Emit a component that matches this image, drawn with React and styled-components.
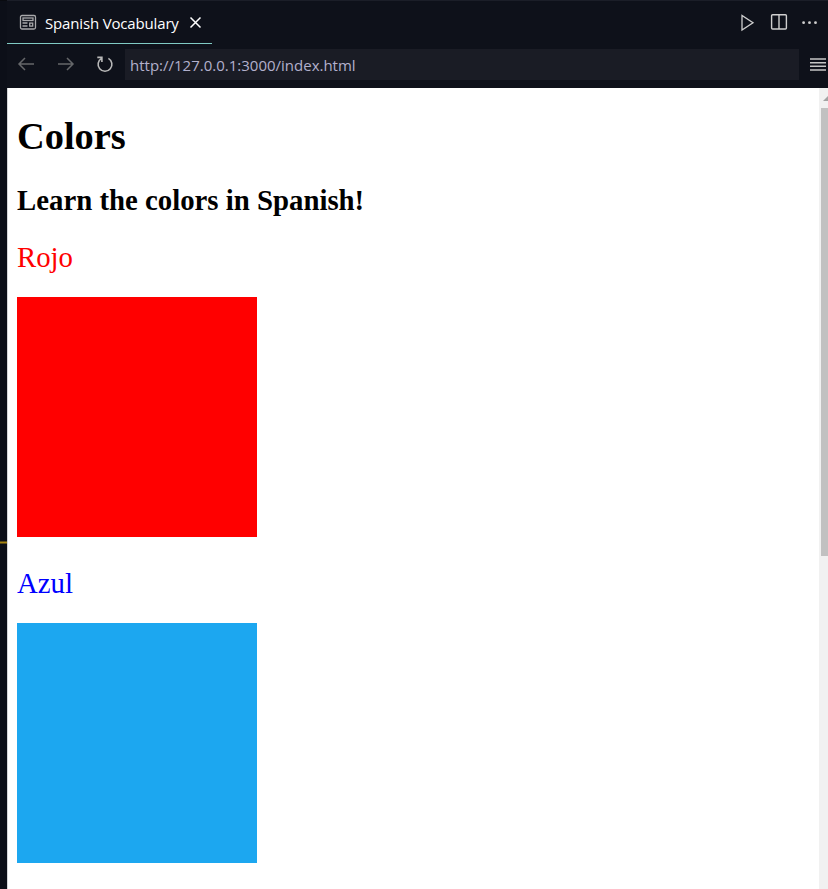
import React from "react";
import styled, { createGlobalStyle } from "styled-components";

const GlobalStyle = createGlobalStyle`
  * { box-sizing: border-box; }
  body { margin: 0; background: #0e111a; overflow: hidden; }
`;

const Window = styled.div`
  display: grid;
  grid-template-columns: 7px 1fr;
  width: 828px;
  height: 889px;
  overflow: hidden;
  background: #0e111a;
  font-family: "Open Sans", "Noto Sans", sans-serif;
`;

const Gutter = styled.div`
  padding-top: 540px;
  background: #0c0f18;
  border-top: 1px solid #090b10;
`;

const GutterMark = styled.div`
  height: 3px;
  background: #a5830f;
  border: solid #5a4a16;
  border-width: 1px 0;
`;

const Pane = styled.div`
  display: flex;
  flex-direction: column;
  min-width: 0;
`;

const TabBar = styled.header`
  display: flex;
  justify-content: space-between;
  height: 44px;
  border-top: 1px solid #1b1e28;
`;

const Tab = styled.div`
  display: flex;
  align-items: center;
  width: 205px;
  height: 43px;
  padding-left: 12px;
  border-bottom: 1px solid #80cbc4;
  color: #fff;
`;

const TabTitle = styled.span`
  width: 134px;
  margin: 1px 11px 0 8px;
  font-size: 15px;
  letter-spacing: -0.16px;
  line-height: 22px;
  white-space: nowrap;
`;

const Actions = styled.div`
  display: flex;
  align-items: center;
  gap: 14px;
  padding: 0 10px 1px 0;
  color: #cfcfcf;
`;

const NavBar = styled.nav`
  display: flex;
  align-items: center;
  height: 44px;
  padding: 0 1px 3px 10px;
  color: #65676a;
`;

const Icon = styled.svg`
  display: block;
  flex: none;
  fill: none;
  stroke: currentColor;
  overflow: visible;
`;

const NavIcon = styled(Icon)`
  margin: 0 ${(p) => p.$gap}px 1px 0;
  color: ${(p) => p.$color || "inherit"};
`;

const Address = styled.div`
  width: 674px;
  height: 31px;
  margin-right: 11px;
  padding-left: 5px;
  background: #1a1c25;
  color: #b2b0cc;
  font-size: 15px;
  letter-spacing: 0;
  line-height: 33px;
  white-space: nowrap;
`;

const Viewport = styled.div`
  display: flex;
  flex: 1;
  min-height: 0;
  border-left: 1px solid #d5d6d8;
  background: #fff;
`;

const Page = styled.main`
  flex: 1;
  padding-left: 9px;
  font-family: "Liberation Serif", "Times New Roman", serif;
`;

const Title = styled.h1`
  margin: 26px 0 0;
  color: #000;
  font-size: 38.4px;
  line-height: 44px;
`;

const Subtitle = styled.h2`
  margin: 26px 0 0;
  color: #000;
  font-size: 28.8px;
  line-height: 33px;
`;

const ColorName = styled.p`
  margin: ${(p) => p.$top}px 0 23px;
  color: ${(p) => p.$color};
  font-size: 28.8px;
  line-height: 33px;
`;

const Swatch = styled.div`
  width: 240px;
  height: 240px;
  background: ${(p) => p.$color};
`;

const ScrollTrack = styled.div`
  width: 9px;
  background: #f1f1f1;
  overflow: hidden;
`;

const ScrollArrow = styled.div`
  width: 10px;
  height: 5px;
  margin: 8px 0 7px 4px;
  background: #a3a3a3;
  clip-path: polygon(50% 0, 100% 100%, 0 100%);
`;

const ScrollThumb = styled.div`
  height: 448px;
  margin-left: 2px;
  background: #c1c1c1;
`;

const colors = [
  { name: "Rojo", text: "#ff0000", fill: "#ff0000", top: 24 },
  { name: "Azul", text: "#0000ff", fill: "#1ca7f0", top: 30 },
];

export default function App() {
  return (
    <Window>
      <GlobalStyle />
      <Gutter>
        <GutterMark />
      </Gutter>
      <Pane>
        <TabBar>
          <Tab>
            <Icon width="18" height="16" viewBox="0 0 18 16" strokeWidth="1.3" color="#a8a8aa">
              <rect x="1.5" y="1.5" width="15" height="13.5" rx="1.5" />
              <rect x="4" y="4" width="10" height="2.5" />
              <path d="M3.5 9h5M3.5 12h5" />
              <rect x="10.7" y="9.1" width="3" height="3" />
            </Icon>
            <TabTitle>Spanish Vocabulary</TabTitle>
            <Icon width="11" height="11" viewBox="0 0 11 11" strokeWidth="1.5">
              <path d="M.5.5l10 10M10.5.5l-10 10" />
            </Icon>
          </Tab>
          <Actions>
            <Icon width="18" height="18" viewBox="0 0 18 18" strokeWidth="1.3">
              <path d="M4 2.5v14.5l11-7.25z" />
            </Icon>
            <Icon width="18" height="18" viewBox="0 0 18 18" strokeWidth="1.4">
              <rect x="1.6" y="1.8" width="14.8" height="14.2" rx="1" />
              <path d="M9 2v14" />
            </Icon>
            <Icon width="16" height="18" viewBox="0 0 16 18">
              <g fill="currentColor" stroke="none">
                <circle cx="1.6" cy="9.7" r="1.4" />
                <circle cx="7.5" cy="9.7" r="1.4" />
                <circle cx="13.5" cy="9.7" r="1.4" />
              </g>
            </Icon>
          </Actions>
        </TabBar>
        <NavBar>
          <NavIcon $gap={22} width="18" height="16" viewBox="0 0 18 16" strokeWidth="1.5">
            <path d="M8 2L2 8l6 6M2.5 8h14.5" />
          </NavIcon>
          <NavIcon $gap={22} width="18" height="16" viewBox="0 0 18 16" strokeWidth="1.5">
            <path d="M10 2l6 6-6 6M1 8h14.5" />
          </NavIcon>
          <NavIcon $gap={10} $color="#b8b8b8" width="18" height="18" viewBox="0 0 18 18" strokeWidth="1.6">
            <path d="M4.6 3.4A6.9 6.9 0 1 0 11.4 3.4M0.3 2.4h4.6v4.6" />
          </NavIcon>
          <Address>http://127.0.0.1:3000/index.html</Address>
          <NavIcon $gap={0} $color="#c5c5c5" width="16" height="14" viewBox="0 0 16 14" strokeWidth="1.5">
            <path d="M0 2h16M0 5.7h16M0 9.3h16M0 13h16" />
          </NavIcon>
        </NavBar>
        <Viewport>
          <Page>
            <Title>Colors</Title>
            <Subtitle>Learn the colors in Spanish!</Subtitle>
            {colors.map((c) => (
              <React.Fragment key={c.name}>
                <ColorName $color={c.text} $top={c.top}>{c.name}</ColorName>
                <Swatch $color={c.fill} />
              </React.Fragment>
            ))}
          </Page>
          <ScrollTrack>
            <ScrollArrow />
            <ScrollThumb />
          </ScrollTrack>
        </Viewport>
      </Pane>
    </Window>
  );
}
